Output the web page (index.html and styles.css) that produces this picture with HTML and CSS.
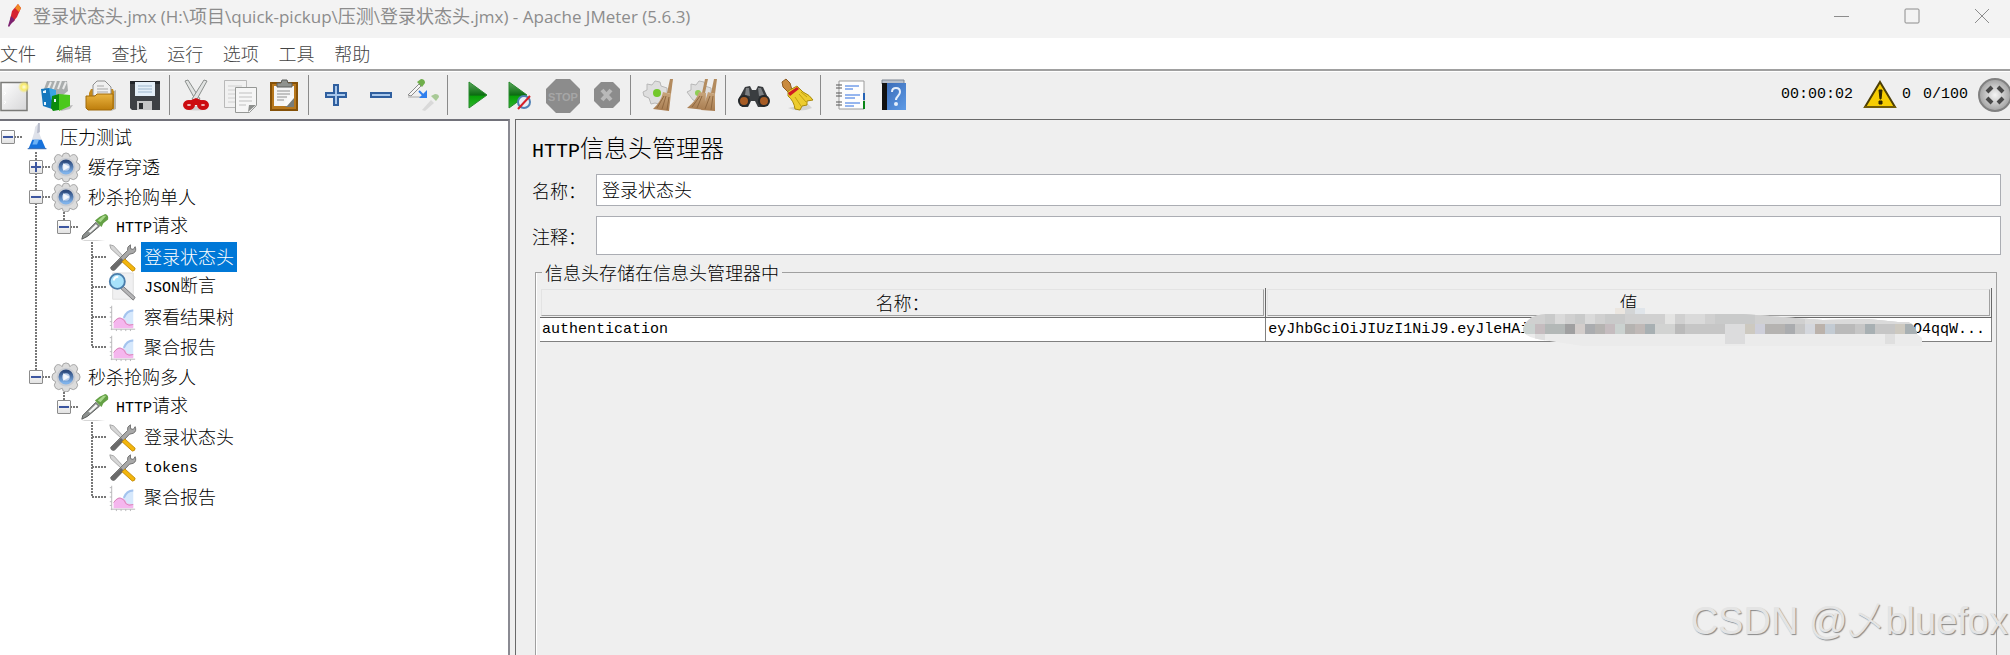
FILE: index.html
```html
<!DOCTYPE html>
<html lang="zh-CN">
<head>
    <meta charset="UTF-8">
    <meta name="viewport" content="width=device-width, initial-scale=1.0">
    <title>Apache JMeter (5.6.3)</title>
    <link rel="stylesheet" href="styles.css">
</head>
<body>
    <!-- shared gradients and tree icons -->
    <svg class="defs" width="0" height="0" aria-hidden="true">
        <defs>
            <linearGradient id="g-paper" x1="0" y1="0" x2="1" y2="1"><stop offset="0" stop-color="#fff"/><stop offset="1" stop-color="#d6d6d8"/></linearGradient>
            <linearGradient id="g-green" x1="0" y1="0" x2="0" y2="1"><stop offset="0" stop-color="#5aa85c"/><stop offset=".5" stop-color="#0c6b12"/><stop offset=".55" stop-color="#08a008"/><stop offset="1" stop-color="#2fb52b"/></linearGradient>
            <linearGradient id="g-gold" x1="0" y1="0" x2="0" y2="1"><stop offset="0" stop-color="#eab440"/><stop offset="1" stop-color="#bd7d0c"/></linearGradient>
            <linearGradient id="g-blue" x1="0" y1="0" x2="1" y2="1"><stop offset="0" stop-color="#3767b3"/><stop offset="1" stop-color="#5e9be6"/></linearGradient>
            <linearGradient id="g-broom" x1="0" y1="0" x2="0" y2="1"><stop offset="0" stop-color="#c9a67c"/><stop offset="1" stop-color="#a87c50"/></linearGradient>
            <radialGradient id="g-ball"><stop offset="0" stop-color="#f5f5f5"/><stop offset="1" stop-color="#a2a2a2"/></radialGradient>
            <radialGradient id="g-sun"><stop offset="0" stop-color="#fffde0"/><stop offset=".5" stop-color="#f7ea6a"/><stop offset="1" stop-color="#f7ea6a" stop-opacity="0"/></radialGradient>
            <linearGradient id="g-hub" x1="0" y1="0" x2="0" y2="1"><stop offset="0" stop-color="#2c4a7d"/><stop offset="1" stop-color="#7fb2ea"/></linearGradient>
        </defs>
        <symbol id="i-flask" viewBox="0 0 32 32">
            <path d="M13 5l4-4v10l6 16H7l5-16z" fill="#dfe2ea"/>
            <path d="M16 1h2v10l-3 1z" fill="#b8bccb"/>
            <path d="M10 19h10l4 9H6z" fill="#1672dc"/>
            <path d="M12 19h5l-2 5h-5z" fill="#6db2f5"/>
            <path d="M5 28h20v1H5z" fill="#0f4fa5"/>
        </symbol>
        <symbol id="i-gear" viewBox="0 0 32 32">
            <path d="M12 5q0-4 4-4t4 4q4-4 7-1t0 7q4 1 4 5t-4 5q3 4 0 7t-7 0q0 4-4 4t-4-4q-4 3-7 0t0-7q-4-1-4-5t4-5q-3-4 0-7t7 1z" fill="#dcdcdc" stroke="#a3a3a3"/>
            <circle cx="16" cy="16" r="10" fill="#c9ccd2"/>
            <circle cx="16" cy="16" r="6" fill="#b9cdeb" stroke="url(#g-hub)" stroke-width="4"/>
            <path d="M13 12l7 4-7 4z" fill="#f4f7fc"/>
        </symbol>
        <symbol id="i-dropper" viewBox="0 0 32 32">
            <path d="M3 29l1-4L18 11l4 4L9 26z" fill="#8d918f" stroke="#545755"/>
            <path d="M10 21l8-8 2 2-8 7z" fill="#f4f5f4"/>
            <path d="M17 9l7 7 2-4 5-4q1-5-3-6l-6 3z" fill="#64a045"/>
            <path d="M20 9l6-5 3 0-6 7z" fill="#a7d78a"/>
            <path d="M3 30h25l-9 1H6z" fill="#c9c9c9"/>
        </symbol>
        <symbol id="i-tools" viewBox="0 0 32 32">
            <path d="M3 3l4 1 12 13-2 2L4 7z" fill="#d6d6d6" stroke="#a3a3a3"/>
            <path d="M22 9q-1-4 3-6l0 4 3 1 2-3q2 5-2 7l-4 1L8 30q-4 1-4-3z" fill="#a9a9a9" stroke="#6c6c6c"/>
            <path d="M15 17l3 3-10 10q-4 1-4-3z" fill="#6a6a6a"/>
            <path d="M19 18l11 10q0 3-3 3L16 21z" fill="#f3b60c" stroke="#c38a05"/>
        </symbol>
        <symbol id="i-lens" viewBox="0 0 32 32">
            <path d="M6 1h22v28H6z" fill="#f0f0f1" stroke="#dedede"/>
            <path d="M17 15l13 12-2 3-13-12z" fill="#b4b4b6" stroke="#7a7a7c"/>
            <circle cx="11" cy="10" r="8" fill="#a7e2fb" stroke="#4a7dab" stroke-width="2"/>
            <path d="M7 9q1-4 5-4" fill="none" stroke="#fff" stroke-width="2"/>
        </symbol>
        <symbol id="i-graph" viewBox="0 0 32 32">
            <path d="M17 16q3-8 11-8v19H17z" fill="#d6e8fc"/>
            <path d="M18 17q3-8 10-8" fill="none" stroke="#a3c3ee" stroke-width="2"/>
            <path d="M7 28v-6q4-7 9-5 4 1 5 6l7 1v4z" fill="#f5b6ee"/>
            <path d="M7 22q5-7 9-4 3 1 4 5 3 3 8 1" fill="none" stroke="#d684b4"/>
            <path d="M5 4v26M4 29h26M3 6h2M3 11h2M3 16h2M3 21h2M3 25h2M10 29v2M15 29v2M20 29v2M25 29v2" fill="none" stroke="#b5b5b8"/>
        </symbol>
    </svg>

    <header class="titlebar">
        <svg class="feather" viewBox="0 0 16 24" aria-hidden="true">
            <path d="M12 0l3 4-4 9-4 5-3-2 2-9z" fill="#d6232f"/>
            <path d="M12 0l3 4-2 4-4-4z" fill="#f08a24"/>
            <path d="M5 12l4 4-4 4-2 3-1-1z" fill="#7c2270"/>
        </svg>
        <h1 class="caption">登录状态头<span>.jmx (H:\</span>项目<span>\quick-pickup\</span>压测<span>\</span>登录状态头<span>.jmx) - Apache JMeter (5.6.3)</span></h1>
        <div class="window-controls">
            <button aria-label="最小化"><svg viewBox="0 0 16 16"><path d="M0 8.500h15"/></svg></button>
            <button aria-label="最大化"><svg viewBox="0 0 16 16"><rect x="1" y="1" width="14" height="14" rx="1"/></svg></button>
            <button aria-label="关闭"><svg viewBox="0 0 16 16"><path d="M1 1l14 14M15 1L1 15"/></svg></button>
        </div>
    </header>

    <nav class="menubar">
        <div class="menus">
            <button>文件</button>
            <button>编辑</button>
            <button>查找</button>
            <button>运行</button>
            <button>选项</button>
            <button>工具</button>
            <button>帮助</button>
        </div>
    </nav>

    <div class="toolbar">
        <button class="tool first" aria-label="新建">
            <svg viewBox="0 0 29 32"><path d="M1 3.500h26v28H1z" fill="url(#g-paper)" stroke="#7b7b78" stroke-width="1.500"/><path d="M4 13l2 1-2 2M4 22l2 1-2 2" fill="none" stroke="#fff"/><circle cx="24" cy="8" r="6" fill="url(#g-sun)"/></svg>
        </button>
        <button class="tool" aria-label="模板">
            <svg viewBox="0 0 32 32"><path d="M20 28l12-2-3 4-9 2z" fill="#b9b9b9"/><path d="M3 10l3-8h20l1 10-10 8z" fill="#a9adad"/><path d="M7 10l3-7M12 10l3-8M17 10l3-8M22 10l3-7" stroke="#e9eaea" stroke-width="2"/><path d="M0 10l8-1 3 3v18l-9-3z" fill="#1477bd"/><path d="M8 9l7 2v6l-5 4z" fill="#39a4e4"/><path d="M11 17l7-2v16l-6 1-2-3z" fill="#0b8c0d"/><path d="M18 15l11 1v11l-11 5z" fill="#4bc81c"/><path d="M2 12l3-1v3H2zM13 20h2v3h-2zM3 23h2v3H3z" fill="#e8f6ff"/></svg>
        </button>
        <button class="tool" aria-label="打开">
            <svg viewBox="0 0 32 32"><path d="M25 14l6-3v19l-5 2z" fill="#b6b4ac"/><path d="M4 14l2-4h22l1 3v17H4z" fill="#c58a1b"/><path d="M8 17V6l4-4h8l6 6v9z" fill="#f0f0f0" stroke="#8f8f8f"/><path d="M12 7h7M12 10h11M12 13h11" stroke="#a7a7a7"/><path d="M1 17h9l2-2h16v14l-2 2H3l-2-2z" fill="url(#g-gold)" stroke="#a06a0a"/></svg>
        </button>
        <button class="tool" aria-label="保存">
            <svg viewBox="0 0 32 32"><path d="M1 2h30v29H3l-2-2z" fill="#3d4044"/><path d="M1 2h30v3H1z" fill="#22262a"/><path d="M6 3h20v14H6z" fill="#e4eff8"/><path d="M9 7h14M9 10h14M9 13h14" stroke="#9eb7cd"/><path d="M8 22h15v9H8z" fill="#c4c5c6"/><path d="M10 24h4v6h-4z" fill="#2b2e31"/></svg>
        </button>
        <span class="separator"></span>
        <button class="tool" aria-label="剪切">
            <svg viewBox="0 0 32 32"><path d="M4 30q12 3 24 0l-5-3H8z" fill="#cfcfcf"/><path d="M5 2l3-1 12 19-4 2z" fill="#e1e3e2" stroke="#8b8f8d"/><path d="M27 2l-3-1-12 19 4 2z" fill="#e1e3e2" stroke="#8b8f8d"/><g fill="#f1c4c4" stroke="#cc0c10" stroke-width="4"><ellipse cx="9" cy="26" rx="4" ry="3"/><ellipse cx="23" cy="26" rx="4" ry="3"/></g><path d="M9 22l7-3 7 3-5 4h-4z" fill="#cc0c10"/></svg>
        </button>
        <button class="tool" aria-label="复制">
            <svg viewBox="0 0 32 32"><path d="M.5 1.500h22v27H.5z" fill="#f1f1f1" stroke="#b9b9b9"/><path d="M4 7h14M4 11h8M4 15h8M4 19h8M4 23h8" stroke="#d0d0d0"/><path d="M11.500 8.500h21v18l-7 7h-14z" fill="#f6f6f6" stroke="#969896"/><path d="M15 14h13M15 18h13M15 22h13M15 26h7" stroke="#c0c0c0"/><path d="M24 33l1-7h7z" fill="#8e908e"/></svg>
        </button>
        <button class="tool" aria-label="粘贴">
            <svg viewBox="0 0 32 32"><path d="M3 4h26v27H3z" fill="#b7771c" stroke="#855108" stroke-width="2"/><path d="M6 7h20v20H6z" fill="#f5f5f5"/><path d="M9 12h13M9 15h13M9 18h10M9 21h7" stroke="#8f9090"/><path d="M17 28l9-10v10z" fill="#777b78"/><path d="M15 27h4l7-8V17h-6z" fill="#f9f9f9"/><path d="M9 8V4h4l1-3h5l1 3h4v4z" fill="#8f928e" stroke="#5b5d5a"/></svg>
        </button>
        <span class="separator"></span>
        <button class="tool" aria-label="展开">
            <svg viewBox="0 0 32 32"><path d="M15 6h4v8h8v4h-8v8h-4v-8H7v-4h8z" fill="#a9c8ec" stroke="#2f5f9f" stroke-width="2"/></svg>
        </button>
        <button class="tool" aria-label="折叠">
            <svg viewBox="0 0 32 32"><path d="M8 14h20v4H8z" fill="#a9c8ec" stroke="#2f5f9f" stroke-width="2"/></svg>
        </button>
        <button class="tool" aria-label="切换">
            <svg viewBox="0 0 32 32"><path d="M1 16L12 5l2 2L4 17z" fill="#f5f5f5" stroke="#8c8c8c"/><path d="M10 3l5 5 3-4q0-4-4-4z" fill="#6fae4b"/><path d="M1 18h13" stroke="#aaa"/><path d="M12 12l5 5" stroke="#2f7fee" stroke-width="2"/><path d="M20 11v8h-8z" fill="#2f7fee"/><path d="M15 31l9-10 3 3-9 8z" fill="#d9d9d9"/><path d="M24 17l5 5 3-4q0-3-4-3z" fill="#a8c996"/></svg>
        </button>
        <span class="separator"></span>
        <button class="tool" aria-label="启动">
            <svg viewBox="0 0 32 32"><path d="M11 3l18 13L11 29z" fill="url(#g-green)" stroke="#2b8a31"/></svg>
        </button>
        <button class="tool" aria-label="不停顿开始">
            <svg viewBox="0 0 32 32"><path d="M7 3l18 13L7 29z" fill="url(#g-green)" stroke="#2b8a31"/><circle cx="22" cy="23" r="6" fill="#e8eef6" stroke="#5181b5" stroke-width="2"/><path d="M16 30L28 17" stroke="#d62028" stroke-width="2"/></svg>
        </button>
        <button class="tool" aria-label="停止" disabled>
            <svg class="wide" viewBox="0 0 34 34"><path d="M10 0h14l10 10v14L24 34H10L0 24V10z" fill="#8c8c8c"/><text class="stop-text" x="17" y="22" text-anchor="middle">STOP</text></svg>
        </button>
        <button class="tool" aria-label="关闭" disabled>
            <svg viewBox="0 0 32 32"><path d="M11 3h12l7 7v12l-7 7H11l-7-7V10z" fill="#8c8c8c"/><path d="M12 11l9 10M21 11l-9 10" stroke="#b9b9b9" stroke-width="4"/></svg>
        </button>
        <span class="separator"></span>
        <button class="tool" aria-label="清除">
            <svg viewBox="0 0 32 32"><path d="M2 13l4-2V5l5 1 3-4 5 1 1 4 6 2v12l-5 1-3 3-4-1-4 1-2-6-5-2z" fill="#dedede" stroke="#b8b8b8"/><circle cx="16" cy="14" r="4" fill="#73c82b"/><path d="M29 0h3l-2 15-4-1z" fill="#b38b5e"/><path d="M22 13l8 2-2 17-16-2q8-7 10-17z" fill="url(#g-broom)"/><path d="M16 29l7-12M21 30l4-13M26 31l2-13" stroke="#8f6840"/></svg>
        </button>
        <button class="tool" aria-label="清除全部">
            <svg viewBox="0 0 32 32"><path d="M2 13l4-2V5l5 1 3-4 5 1 1 4 6 2v12l-5 1-8 1-5-2z" fill="#dedede" stroke="#b8b8b8"/><circle cx="13" cy="14" r="3" fill="#8fce55"/><path d="M20 0h3l-3 14h-3zM29 0h3l-2 15-4-1z" fill="#b38b5e"/><path d="M14 13l7 1-1 17-18-2q9-7 12-16z" fill="url(#g-broom)"/><path d="M23 13l7 2v17l-14-1q5-9 7-18z" fill="url(#g-broom)"/><path d="M7 28l8-11M12 29l5-12M20 30l5-13M26 31l2-14" stroke="#8f6840"/></svg>
        </button>
        <span class="separator"></span>
        <button class="tool" aria-label="查找">
            <svg class="wide" viewBox="0 0 34 34"><path d="M2 21L9 8l5-1 2 4h4l2-4 5 1 6 13-5 7h-6l-3-6h-4l-3 6H6z" fill="#3a3d40"/><path d="M10 9l3 0 1 8-5-1zM22 9h3l3 7-5 1z" fill="#7d8083"/><circle cx="8" cy="22" r="6" fill="#25282a"/><circle cx="28" cy="22" r="6" fill="#25282a"/><circle cx="8" cy="22" r="4" fill="#a75c25"/><circle cx="28" cy="22" r="4" fill="#a75c25"/></svg>
        </button>
        <button class="tool" aria-label="重置查找">
            <svg viewBox="0 0 32 32"><path d="M8 29q12 5 24 0l-4-4z" fill="#d3d3d3"/><path d="M2 3l4-3 4 4 2 7-4 2-5-5z" fill="#c98a3e" stroke="#8e5a20"/><path d="M8 12l9-5 6 6q7 3 10 8l-6 1 0 4-5 1-2 4-5-1q-1-8-7-13z" fill="#edcc2e" stroke="#a98a0d"/><path d="M8 14l9-6 2 2-9 7z" fill="#d11a22"/><path d="M15 18l6 9M19 15l7 8M21 13l6 5" stroke="#c2a010"/></svg>
        </button>
        <span class="separator"></span>
        <button class="tool" aria-label="函数助手">
            <svg viewBox="0 0 32 32"><path d="M8 2h25v28H8z" fill="#fdfdfd" stroke="#9b9b9b"/><path d="M32 14h2v7h-2z" fill="#2563b5"/><path d="M32 22h2v8h-2z" fill="#0a8517"/><path d="M14 7h14M14 10h8M14 16h15M14 19h10M14 24h15M14 27h9" stroke="#2f6fe0"/><path d="M5 6h6M5 9h6M5 14h6M5 17h6M5 23h6M5 26h6" stroke="#555"/></svg>
        </button>
        <button class="tool" aria-label="帮助">
            <svg viewBox="0 0 32 32"><path d="M7 1h22v4H7z" fill="#b8c0cc" stroke="#7f8793"/><path d="M7 4h24v27H7z" fill="url(#g-blue)"/><path d="M7 4h5v27H7z" fill="#111"/><path d="M17 13q0-4 4-4t4 4q0 2-2 4t-2 4" fill="none" stroke="#e6effb" stroke-width="2"/><circle cx="21" cy="25" r="2" fill="#e6effb"/></svg>
        </button>

        <div class="status">
            <span>00:00:02</span>
            <button class="warning" aria-label="日志">
                <svg viewBox="0 0 34 30"><path d="M17 2l15 25H2z" fill="#f6cd02" stroke="#4d3f05" stroke-width="2"/><path d="M1 26h32v2H1z" fill="#725c08"/><path d="M16 10h3l-1 9h-1zM16 21h3v3h-3z" fill="#2d2505" stroke="#2d2505"/></svg>
            </button>
            <span class="errors">0</span>
            <span class="threads">0/100</span>
            <svg class="running" viewBox="0 0 34 34" aria-hidden="true"><circle cx="17" cy="17" r="16" fill="url(#g-ball)" stroke="#818181" stroke-width="2"/><path d="M9 14l5-5M20 9l5 5M25 20l-5 5M14 25l-5-5" stroke="#484848" stroke-width="4"/></svg>
        </div>
    </div>

    <main class="workspace">
        <aside class="tree-panel">
            <ul class="tree">
                <li>
                    <div class="node"><span class="branch"><button class="toggle" aria-label="折叠"></button></span><svg class="icon"><use href="#i-flask"/></svg><span class="label">压力测试</span></div>
                    <ul>
                        <li>
                            <div class="node"><span class="branch"><button class="toggle closed" aria-label="展开"></button></span><svg class="icon"><use href="#i-gear"/></svg><span class="label">缓存穿透</span></div>
                        </li>
                        <li>
                            <div class="node"><span class="branch"><button class="toggle" aria-label="折叠"></button></span><svg class="icon"><use href="#i-gear"/></svg><span class="label">秒杀抢购单人</span></div>
                            <ul>
                                <li>
                                    <div class="node"><span class="branch"><button class="toggle" aria-label="折叠"></button></span><svg class="icon"><use href="#i-dropper"/></svg><span class="label"><span class="latin">HTTP</span>请求</span></div>
                                    <ul>
                                        <li><div class="node"><span class="branch"></span><svg class="icon"><use href="#i-tools"/></svg><span class="label selected">登录状态头</span></div></li>
                                        <li><div class="node"><span class="branch"></span><svg class="icon"><use href="#i-lens"/></svg><span class="label"><span class="latin">JSON</span>断言</span></div></li>
                                        <li><div class="node"><span class="branch"></span><svg class="icon"><use href="#i-graph"/></svg><span class="label">察看结果树</span></div></li>
                                        <li><div class="node"><span class="branch"></span><svg class="icon"><use href="#i-graph"/></svg><span class="label">聚合报告</span></div></li>
                                    </ul>
                                </li>
                            </ul>
                        </li>
                        <li>
                            <div class="node"><span class="branch"><button class="toggle" aria-label="折叠"></button></span><svg class="icon"><use href="#i-gear"/></svg><span class="label">秒杀抢购多人</span></div>
                            <ul>
                                <li>
                                    <div class="node"><span class="branch"><button class="toggle" aria-label="折叠"></button></span><svg class="icon"><use href="#i-dropper"/></svg><span class="label"><span class="latin">HTTP</span>请求</span></div>
                                    <ul>
                                        <li><div class="node"><span class="branch"></span><svg class="icon"><use href="#i-tools"/></svg><span class="label">登录状态头</span></div></li>
                                        <li><div class="node"><span class="branch"></span><svg class="icon"><use href="#i-tools"/></svg><span class="label"><span class="latin">tokens</span></span></div></li>
                                        <li><div class="node"><span class="branch"></span><svg class="icon"><use href="#i-graph"/></svg><span class="label">聚合报告</span></div></li>
                                    </ul>
                                </li>
                            </ul>
                        </li>
                    </ul>
                </li>
            </ul>
        </aside>

        <section class="editor">
            <h2 class="editor-title"><span class="latin">HTTP</span>信息头管理器</h2>
            <div class="field">
                <label for="name">名称：</label>
                <input id="name" type="text" value="登录状态头">
            </div>
            <div class="field comment">
                <label for="comment">注释：</label>
                <input id="comment" type="text">
            </div>
            <fieldset class="headers">
                <legend>信息头存储在信息头管理器中</legend>
                <table>
                    <thead>
                        <tr><th><div>名称：</div></th><th><div>值</div></th></tr>
                    </thead>
                    <tbody>
                        <tr>
                            <td>authentication</td>
                            <td>
                                <div class="token">
                                    <span>eyJhbGciOiJIUzI1NiJ9.eyJleHAi</span>
                                    <span>O4qqW...</span>
                                    <svg class="mosaic" viewBox="0 0 400 38" aria-hidden="true">
                                        <clipPath id="smear"><path d="M0 22Q2 8 22 6H92V0H122V6H220L300 12L345 11L375 14H385Q392 16 394 26L399 30V38H60L20 32Q2 30 0 22z"/></clipPath>
                                        <g clip-path="url(#smear)">
                                            <path d="M0 0h400v38H0z" fill="#ebebeb"/>
                                            <path d="M0 6h400v10H0z" fill="#d0d0d0"/>
                                            <path d="M0 16h400v10H0z" fill="#c6c6c6"/>
                                            <path d="M92 0h10v6h-10z" fill="#ebe6e0"/><path d="M102 0h10v6h-10z" fill="#d3d5d6"/><path d="M112 0h10v6h-10z" fill="#e0e5ea"/>
                                            <path d="M32 6h10v10h-10zM62 6h10v10h-10zM162 6h10v10h-10zM172 6h10v10h-10z" fill="#dadada"/>
                                            <path d="M22 6h10v10h-10zM52 6h10v10h-10zM82 6h20v10h-20zM192 6h40v10h-40z" fill="#c9caca"/>
                                            <path d="M142 6h10v10h-10z" fill="#e4e4e3"/>
                                            <path d="M282 6h118v10h-118z" fill="#dadada"/>
                                            <path d="M0 16h12v10h-12zM92 16h10v10h-10z" fill="#cbd2d0"/>
                                            <path d="M12 16h10v10h-10zM82 16h10v10h-10z" fill="#c5bcbf"/>
                                            <path d="M22 16h20v10h-20z" fill="#b3b8b7"/>
                                            <path d="M42 16h10v10h-10z" fill="#a0a0a1"/>
                                            <path d="M52 16h10v10h-10z" fill="#d3cdcb"/>
                                            <path d="M62 16h10v10h-10zM262 16h10v10h-10z" fill="#aaacaf"/>
                                            <path d="M72 16h10v10h-10zM102 16h10v10h-10zM242 16h20v10h-20z" fill="#b5b3b1"/>
                                            <path d="M112 16h10v10h-10z" fill="#c0b9b7"/>
                                            <path d="M122 16h10v10h-10zM342 16h10v10h-10zM382 16h18v10h-18z" fill="#a8b0b3"/>
                                            <path d="M132 16h20v10h-20z" fill="#d2d3d2"/>
                                            <path d="M152 16h10v10h-10zM312 16h20v10h-20z" fill="#bababa"/>
                                            <path d="M202 16h20v20h-20z" fill="#dcdcdd"/>
                                            <path d="M222 16h10v10h-10zM372 16h10v10h-10z" fill="#cdc9c0"/>
                                            <path d="M232 16h10v10h-10z" fill="#cecfda"/>
                                            <path d="M282 16h10v10h-10z" fill="#d4d7dd"/>
                                            <path d="M292 16h10v10h-10z" fill="#bbb2ab"/>
                                            <path d="M302 16h10v10h-10z" fill="#c3cbd3"/>
                                            <path d="M12 26h10v10h-10zM362 26h10v10h-10z" fill="#dfdfdf"/>
                                        </g>
                                    </svg>
                                </div>
                            </td>
                        </tr>
                    </tbody>
                </table>
            </fieldset>
        </section>
    </main>

    <div class="watermark">CSDN @乄bluefox</div>
</body>
</html>
```
FILE: styles.css
```css
* {
    box-sizing: border-box;
}
body {
    display: flex;
    flex-direction: column;
    height: 100vh;
    margin: 0;
    overflow: hidden;
    position: relative;
    background-color: #efefef;
    color: #000;
    font-family: "Noto Sans CJK SC", sans-serif;
    font-size: 18px;
    font-weight: 300;
    line-height: 24px;
}
button {
    padding: 0;
    border: none;
    background: none;
    color: inherit;
    font: inherit;
}
svg {
    display: block;
}
.defs {
    position: absolute;
}
.latin {
    font-family: "Liberation Mono", monospace;
    font-size: 15px;
    font-weight: 400;
}

/* title bar */
.titlebar {
    display: flex;
    align-items: center;
    flex: none;
    height: 38px;
    padding: 0 20px 6px 6px;
    background-color: #f3f3f3;
    color: #8c8c8c;
}
.feather {
    width: 16px;
    height: 24px;
}
.caption {
    flex: 1;
    margin: 0 0 0 11px;
    font-size: 18px;
    font-weight: 400;
}
.caption span {
    font-family: "Open Sans", sans-serif;
    font-size: 17px;
}
.window-controls {
    display: flex;
    gap: 54px;
}
.window-controls svg {
    width: 16px;
    height: 16px;
    fill: none;
    stroke: #8c8c8c;
}

/* menu bar */
.menubar {
    flex: none;
    height: 33px;
    padding-top: 3px;
    border-bottom: 2px solid #a0a0a0;
    background-color: #fff;
    color: #444;
}
.menus {
    display: grid;
    grid-template-columns: repeat(7, 1fr);
    width: 390px;
}
.menus button {
    text-align: left;
}

/* toolbar */
.toolbar {
    display: flex;
    align-items: center;
    flex: none;
    gap: 12px;
    height: 48px;
    padding-bottom: 1px;
    border-top: 1px solid #fff;
}
.tool {
    flex: none;
    width: 32px;
    height: 32px;
}
.tool svg {
    width: 32px;
    height: 32px;
    overflow: visible;
}
.tool.first,
.tool.first svg {
    width: 29px;
}
.tool .wide {
    width: 34px;
    height: 34px;
}
.stop-text {
    fill: #a6a6a6;
    font: bold 11px "Liberation Sans", sans-serif;
}
.separator {
    flex: none;
    width: 1px;
    height: 40px;
    margin: 0 -2px 0 -4px;
    background-color: #8a8a8a;
}
.status {
    display: flex;
    align-items: center;
    margin: 0 -2px 0 auto;
    font-family: "Liberation Mono", monospace;
    font-size: 15px;
    font-weight: 400;
}
.warning {
    margin: 0 5px 0 10px;
}
.warning svg {
    width: 34px;
    height: 30px;
}
.threads {
    margin: 0 10px 0 12px;
}
.running {
    width: 34px;
    height: 34px;
}

/* workspace */
.workspace {
    display: flex;
    flex: 1;
    gap: 5px;
    min-height: 0;
}
.tree-panel {
    flex: none;
    width: 510px;
    border-top: 2px solid #72727a;
    border-right: 2px solid #8a8a92;
    background-color: #fff;
}
.tree,
.tree ul {
    margin: 0;
    padding: 0;
    list-style: none;
}
.tree {
    padding: 1px 0 0 1px;
}
.tree ul {
    padding-left: 28px;
}
.tree ul > li {
    background: repeating-linear-gradient(#777 0 2px, transparent 2px 3px) 6px 0 / 2px 100% no-repeat;
}
.tree ul > li:last-child {
    background-size: 2px 15px;
}
.node {
    display: flex;
    align-items: center;
    height: 30px;
}
.branch {
    display: flex;
    align-items: center;
    width: 22px;
    height: 30px;
    background: repeating-linear-gradient(90deg, #777 0 2px, transparent 2px 3px) 7px 14px / 14px 2px no-repeat;
}
.toggle {
    width: 14px;
    height: 14px;
    border: 1px solid #8c8c8c;
    border-radius: 1px;
    background: linear-gradient(#3c56a0, #3c56a0) center / 10px 2px no-repeat, linear-gradient(#fff, #e2e2e2);
}
.toggle.closed {
    background: linear-gradient(#3c56a0, #3c56a0) center / 10px 2px no-repeat, linear-gradient(#3c56a0, #3c56a0) center / 2px 10px no-repeat, linear-gradient(#fff, #e2e2e2);
}
.icon {
    width: 30px;
    height: 30px;
}
.label {
    margin-left: 4px;
    padding: 0 3px 2px;
    line-height: 28px;
}
.label.selected {
    background-color: #0078d7;
    color: #fff;
}

/* editor */
.editor {
    display: flex;
    flex: 1;
    flex-direction: column;
    min-width: 0;
    padding: 11px 9px 0 16px;
    border-top: 1px solid #696969;
    border-left: 1px solid #696969;
}
.editor-title {
    margin: 0 0 6px;
    font-size: 24px;
    font-weight: 300;
    line-height: 32px;
}
.editor-title .latin {
    font-size: 20px;
}
.field {
    display: flex;
    align-items: center;
    margin-bottom: 10px;
}
.field label {
    width: 64px;
}
.field input {
    flex: 1;
    height: 32px;
    padding: 0 5px 2px;
    border: 1px solid #abadb3;
    background-color: #fff;
    color: #000;
    font: inherit;
}
.field.comment {
    margin-bottom: 5px;
}
.field.comment input {
    height: 39px;
}
.headers {
    flex: 1;
    min-width: 0;
    margin: 0 4px 0 3px;
    padding: 4px 4px 0 4px;
    border: 1px solid #a0a0a0;
    border-bottom: none;
    box-shadow: inset 1px 0 #fff;
}
.headers legend {
    margin-left: 2px;
    padding: 0 3px;
}
.headers table {
    width: 100%;
    border-collapse: collapse;
    table-layout: fixed;
}
.headers th {
    padding: 1px;
    border: solid #696969;
    border-width: 0 1px 1px 0;
    font-weight: 300;
}
.headers th div {
    height: 27px;
    border: 1px solid #a0a0a0;
    border-top-color: #e3e3e3;
    border-left-color: #e3e3e3;
    line-height: 24px;
}
.headers td {
    height: 24px;
    padding: 0 0 0 2px;
    border: solid #808080;
    border-width: 0 1px 1px 0;
    background-color: #fff;
    font-family: "Liberation Mono", monospace;
    font-size: 15px;
    font-weight: 400;
    line-height: 23px;
}
.token {
    display: flex;
    justify-content: space-between;
    position: relative;
    padding-right: 6px;
}
.mosaic {
    position: absolute;
    top: -10px;
    right: 68px;
    width: 400px;
    height: 38px;
}

.watermark {
    position: absolute;
    right: 2px;
    bottom: 12px;
    color: #e4e4e4;
    font-family: "Liberation Sans", "Noto Sans CJK SC", sans-serif;
    font-size: 38px;
    line-height: 44px;
    text-shadow: 1px 1px 1px #888;
}
```
